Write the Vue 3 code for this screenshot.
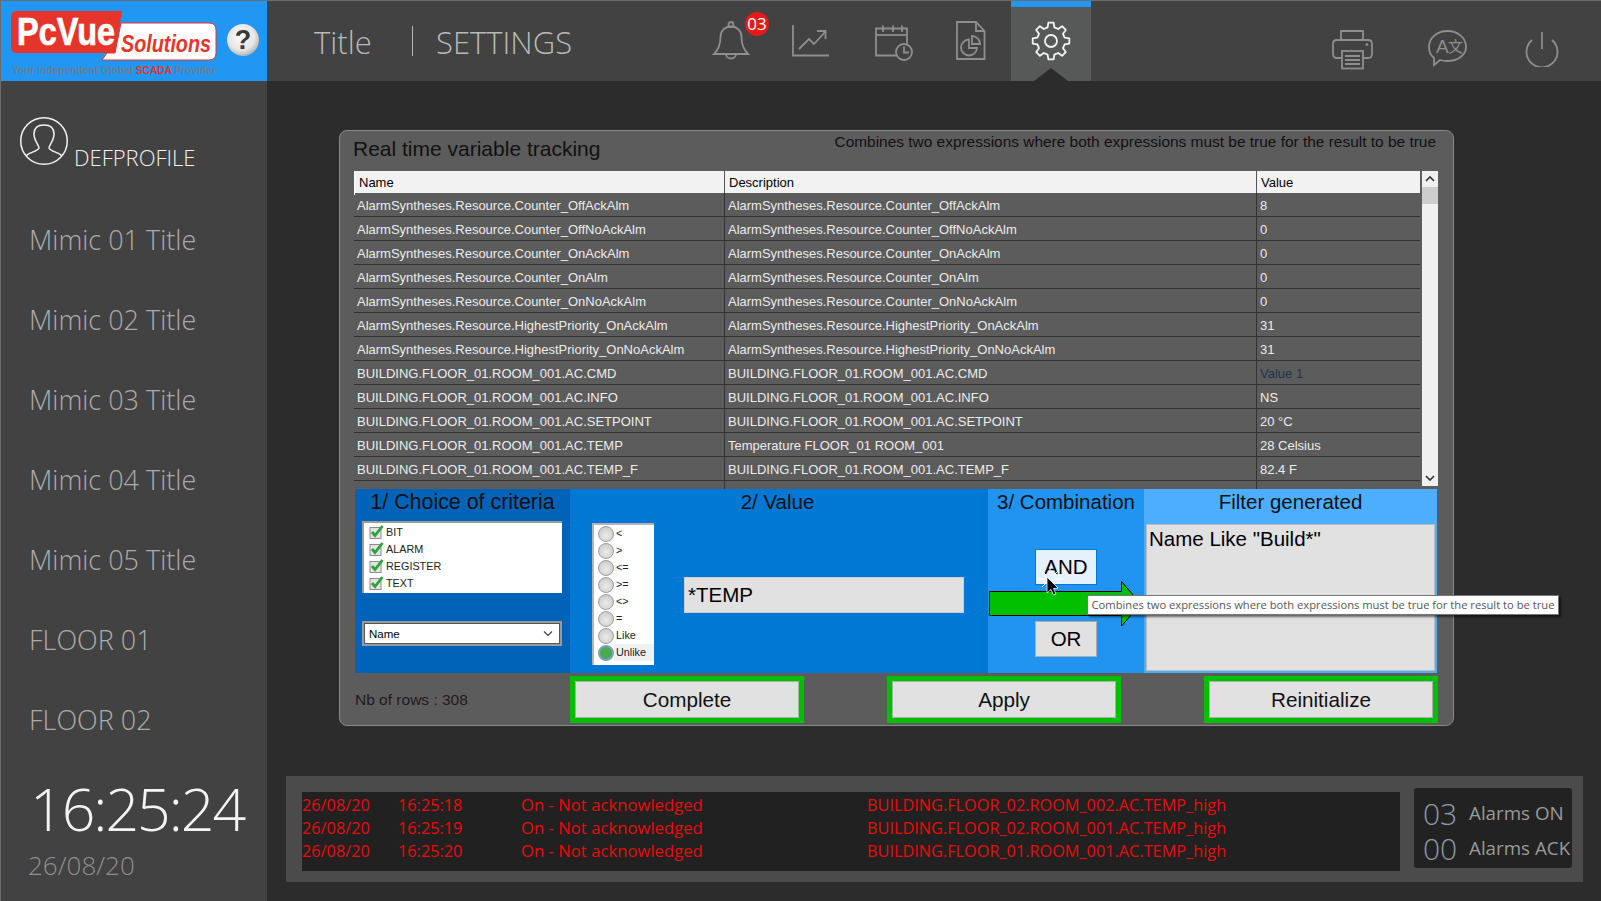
<script setup>
const menu = ['Mimic 01 Title', 'Mimic 02 Title', 'Mimic 03 Title', 'Mimic 04 Title', 'Mimic 05 Title', 'FLOOR 01', 'FLOOR 02']

const b1 = 'BUILDING.FLOOR_01.ROOM_001.AC.'
const rows = [
  ['AlarmSyntheses.Resource.Counter_OffAckAlm', 'AlarmSyntheses.Resource.Counter_OffAckAlm', '8'],
  ['AlarmSyntheses.Resource.Counter_OffNoAckAlm', 'AlarmSyntheses.Resource.Counter_OffNoAckAlm', '0'],
  ['AlarmSyntheses.Resource.Counter_OnAckAlm', 'AlarmSyntheses.Resource.Counter_OnAckAlm', '0'],
  ['AlarmSyntheses.Resource.Counter_OnAlm', 'AlarmSyntheses.Resource.Counter_OnAlm', '0'],
  ['AlarmSyntheses.Resource.Counter_OnNoAckAlm', 'AlarmSyntheses.Resource.Counter_OnNoAckAlm', '0'],
  ['AlarmSyntheses.Resource.HighestPriority_OnAckAlm', 'AlarmSyntheses.Resource.HighestPriority_OnAckAlm', '31'],
  ['AlarmSyntheses.Resource.HighestPriority_OnNoAckAlm', 'AlarmSyntheses.Resource.HighestPriority_OnNoAckAlm', '31'],
  [b1 + 'CMD', b1 + 'CMD', 'Value 1'],
  [b1 + 'INFO', b1 + 'INFO', 'NS'],
  [b1 + 'SETPOINT', b1 + 'SETPOINT', '20 °C'],
  [b1 + 'TEMP', 'Temperature FLOOR_01 ROOM_001', '28 Celsius'],
  [b1 + 'TEMP_F', b1 + 'TEMP_F', '82.4 F'],
  ['', '', '']
]

const criteria = ['BIT', 'ALARM', 'REGISTER', 'TEXT']
const operators = ['<', '>', '<=', '>=', '<>', '=', 'Like', 'Unlike']

const alarms = [
  ['26/08/20', '16:25:18', 'BUILDING.FLOOR_02.ROOM_002.AC.TEMP_high'],
  ['26/08/20', '16:25:19', 'BUILDING.FLOOR_02.ROOM_001.AC.TEMP_high'],
  ['26/08/20', '16:25:20', 'BUILDING.FLOOR_01.ROOM_001.AC.TEMP_high']
]

// gear outline, 8 teeth
function gearPath(cx, cy, outer, inner) {
  const pts = []
  for (let i = 0; i < 8; i++) {
    const a = (i * Math.PI) / 4 - Math.PI / 2
    const s = Math.PI / 8
    const add = (r, t) => pts.push((cx + r * Math.cos(t)).toFixed(1) + ' ' + (cy + r * Math.sin(t)).toFixed(1))
    add(inner, a - s * 0.62)
    add(outer, a - s * 0.36)
    add(outer, a + s * 0.36)
    add(inner, a + s * 0.62)
  }
  return 'M' + pts.join('L') + 'Z'
}
const gear = gearPath(21, 21, 18.5, 14)
</script>

<template>
  <div class="screen">
    <aside class="side">
      <div class="logo">
        <svg width="266" height="80" viewBox="0 0 266 80">
          <path d="M16 10 H121 L114 52 H16 Q10 52 10 46 V16 Q10 10 16 10Z" fill="#e5352a" />
          <path d="M120 22 H208 Q215 22 215 29 V52 Q215 59 208 59 H101 L106 52 H114Z" fill="#fff" stroke="#e5352a" stroke-width="1" />
          <text x="16" y="44" class="lg-pc" textLength="98" lengthAdjust="spacingAndGlyphs">PcVue</text>
          <text x="120" y="51" class="lg-sol" textLength="90" lengthAdjust="spacingAndGlyphs">Solutions</text>
          <text x="11" y="73" class="lg-tag" textLength="204" lengthAdjust="spacingAndGlyphs">Your Independent Global <tspan fill="#e5352a">SCADA</tspan> Provider</text>
          <defs>
            <radialGradient id="hlp" cx="45%" cy="40%" r="60%">
              <stop offset="0%" stop-color="#fbfbfb" />
              <stop offset="70%" stop-color="#e6e6e6" />
              <stop offset="100%" stop-color="#b4b4b4" />
            </radialGradient>
          </defs>
          <circle cx="242" cy="39" r="16" fill="url(#hlp)" />
          <text x="242" y="48" text-anchor="middle" class="lg-help">?</text>
        </svg>
      </div>

      <div class="profile">
        <svg width="50" height="50" viewBox="0 0 50 50" fill="none" stroke="#f2f2f2" stroke-width="1.5">
          <circle cx="25" cy="25" r="23.3" />
          <path d="M7 40 C10 36 18 36 20 32 C20 29 15 25 15 18 C15 12 19 9 25 9 C31 9 35 12 35 18 C35 25 30 29 30 32 C32 36 40 36 43 40" />
        </svg>
        <span class="profile-name">DEFPROFILE</span>
      </div>

      <nav class="menu">
        <div v-for="m in menu" :key="m" class="menu-item">{{ m }}</div>
      </nav>

      <div class="clock">16:25:24</div>
      <div class="date">26/08/20</div>
    </aside>

    <main class="main">
      <header class="top">
        <div class="title">Title</div>
        <div class="sep"></div>
        <div class="page-name">SETTINGS</div>

        <div class="tool bell">
          <svg width="38" height="40" viewBox="0 0 38 40" class="ico">
            <circle cx="19" cy="3.5" r="2.5" />
            <path d="M2 33 C7 28 8.500 23 8.500 16 C8.500 9.500 13 5.500 19 5.500 C25 5.500 29.500 9.500 29.500 16 C29.500 23 31 28 36 33Z" />
            <path d="M14 33 C14 39 24 39 24 33" />
          </svg>
          <span class="badge">03</span>
        </div>
        <div class="tool chart">
          <svg width="38" height="32" viewBox="0 0 38 32" class="ico">
            <path d="M1 0 V30.500 H37" />
            <path d="M7 24 L17 14 L22 19 L33 7" />
            <path d="M25 6 H33.500 V14" />
          </svg>
        </div>
        <div class="tool cal">
          <svg width="39" height="36" viewBox="0 0 39 36" class="ico">
            <path d="M23 30.500 H1 V3.500 H32 V19" />
            <path d="M1 10 H32" />
            <path d="M8 0.500 V7 M18 0.500 V7 M27 0.500 V7" />
            <circle cx="29" cy="27" r="8" />
            <path d="M29 21.500 V27.500 H34" />
          </svg>
        </div>
        <div class="tool doc">
          <svg width="30" height="40" viewBox="0 0 30 40" class="ico">
            <path d="M1 1 H20 L28.500 10 V38 H1Z" />
            <path d="M20 1 V10 H28.500" />
            <path d="M13 18.500 A8 8 0 1 0 21 27 H13Z" />
            <path d="M16 15 A8 8 0 0 1 24 23 H16Z" />
          </svg>
        </div>
        <div class="tool gear-tab">
          <svg width="42" height="42" viewBox="0 0 42 42" class="ico-on">
            <path :d="gear" />
            <circle cx="21" cy="21" r="6" />
          </svg>
          <span class="notch"></span>
        </div>

        <div class="tool printer">
          <svg width="42" height="40" viewBox="0 0 42 40" class="ico">
            <path d="M9 10 V1 H31 V10" />
            <path d="M10 28 H5 Q1 28 1 24 V14 Q1 10 5 10 H36 Q40 10 40 14 V24 Q40 28 36 28 H31" />
            <rect x="10" y="21" width="21" height="17.500" />
            <path d="M13 26 H28 M13 30 H28 M13 34 H28" />
            <circle cx="35" cy="14.500" r="0.600" />
          </svg>
        </div>
        <div class="tool lang">
          <svg width="40" height="38" viewBox="0 0 40 38" class="ico">
            <path d="M6 28 C2 25 1 21 1 17 C1 8 9 1 19.500 1 C30 1 38 8 38 17 C38 25 30 31 19.500 31 C16.500 31 14 30.500 12 30 L6 35 Z" />
            <text x="8" y="23" class="t-a">A</text>
            <text x="20" y="22" class="t-b">文</text>
          </svg>
        </div>
        <div class="tool power">
          <svg width="34" height="36" viewBox="0 0 34 36" class="ico">
            <path d="M17 1 V18" />
            <path d="M7 9 A15.500 15.500 0 1 0 27 9" />
          </svg>
        </div>
      </header>

      <section class="panel">
        <div class="panel-head">
          <div class="panel-title">Real time variable tracking</div>
          <div class="panel-hint">Combines two expressions where both expressions must be true for the result to be true</div>
        </div>

        <div class="grid-wrap">
          <div class="grid">
            <div class="g-head">
              <div>Name</div>
              <div>Description</div>
              <div>Value</div>
            </div>
            <div class="g-body">
              <div v-for="(r, i) in rows" :key="i" class="g-row">
                <div>{{ r[0] }}</div>
                <div>{{ r[1] }}</div>
                <div :class="{ linked: r[2] === 'Value 1' }">{{ r[2] }}</div>
              </div>
            </div>
          </div>
          <div class="scroll">
            <svg width="16" height="16" viewBox="0 0 16 16" fill="none" stroke="#333" stroke-width="1.6"><path d="M4 10 L8 6 L12 10" /></svg>
            <div class="thumb"></div>
            <div class="track"></div>
            <svg width="16" height="16" viewBox="0 0 16 16" fill="none" stroke="#333" stroke-width="1.6"><path d="M4 6 L8 10 L12 6" /></svg>
          </div>
        </div>

        <div class="filter">
          <div class="f-col c1">
            <div class="f-h">1/ Choice of criteria</div>
            <div class="checks">
              <div v-for="c in criteria" :key="c" class="chk">
                <svg width="15" height="15" viewBox="0 0 15 15">
                  <rect x="1" y="3.500" width="11" height="11" fill="#e4e4e4" stroke="#8b8b8b" />
                  <path d="M3 8 L6 11.500 L13.500 2" fill="none" stroke="#2da33a" stroke-width="2.800" />
                </svg>
                <span>{{ c }}</span>
              </div>
            </div>
            <div class="combo">
              <span>Name</span>
              <svg width="12" height="8" viewBox="0 0 12 8" fill="none" stroke="#444" stroke-width="1.200"><path d="M2 1.500 L6 5.500 L10 1.500" /></svg>
            </div>
          </div>

          <div class="f-col c2">
            <div class="f-h">2/ Value</div>
            <div class="c2-body">
              <div class="radios">
                <div v-for="o in operators" :key="o" class="radio" :class="{ on: o === 'Unlike' }">
                  <i class="dot"></i>
                  <span>{{ o }}</span>
                </div>
              </div>
              <div class="value-box">*TEMP</div>
            </div>
          </div>

          <div class="f-col c3">
            <div class="f-h">3/ Combination</div>
            <div class="btn-and">AND</div>
            <div class="btn-or">OR</div>
          </div>

          <div class="f-col c4">
            <div class="f-h">Filter generated</div>
            <div class="filter-box">Name Like "Build*"</div>
          </div>
        </div>

        <div class="actions">
          <div class="count">Nb of rows : 308</div>
          <div class="act">Complete</div>
          <div class="act">Apply</div>
          <div class="act">Reinitialize</div>
        </div>

        <!-- overlays : arrow, tooltip and mouse -->
        <svg class="arrow" width="154" height="48" viewBox="0 0 154 48">
          <path d="M0.500 11.500 H132.500 V1.500 L152 24 L132.500 46 V35.500 H0.500Z" fill="#00c000" stroke="#000" />
        </svg>
        <div class="tip">Combines two expressions where both expressions must be true for the result to be true</div>
        <svg class="cursor" width="30" height="34" viewBox="0 0 30 34">
          <path d="M2 13 H10 M20 13 H28 M15 1 V7 M7 5 L11 9 M23 5 L19 9 M7 21 L11 17" stroke="#fff" stroke-width="1" fill="none" />
          <path d="M12 11 V27 L16 23.500 L18.500 29 L21 28 L18.500 22.500 L23 22Z" fill="#000" stroke="#fff" stroke-width="0.800" />
        </svg>
      </section>

      <section class="alarm-bar">
        <div class="alarm-list">
          <div v-for="a in alarms" :key="a[1]" class="alarm-row">
            <span class="a-date">{{ a[0] }}</span>
            <span class="a-time">{{ a[1] }}</span>
            <span class="a-state">On - Not acknowledged</span>
            <span>{{ a[2] }}</span>
          </div>
        </div>
        <div class="alarm-count">
          <div class="cnt-row"><b>03</b><span>Alarms ON</span></div>
          <div class="cnt-row"><b>00</b><span>Alarms ACK</span></div>
        </div>
      </section>
    </main>
  </div>
</template>

<style>
html, body {
  margin: 0;
  background: #2c2c2c;
}
</style>

<style scoped>
.screen {
  width: 1600px;
  height: 900px;
  display: flex;
  border-top: 1px solid #6c6c6c;
  border-left: 1px solid #6c6c6c;
  background: #2c2c2c;
  overflow: hidden;
  font-family: "Liberation Sans", Arial, sans-serif;
}

/* side */
.side {
  width: 266px;
  flex: none;
  background: #424242;
  font-family: "Open Sans", sans-serif;
  font-weight: 300;
}
.logo {
  height: 80px;
  background: #2196f3;
}
.logo svg {
  display: block;
}
.lg-pc {
  font: bold 38px "Liberation Sans", sans-serif;
  fill: #fff;
  stroke: #fff;
  stroke-width: 0.7;
}
.lg-sol {
  font: italic bold 23.5px "Liberation Sans", sans-serif;
  fill: #e5352a;
}
.lg-tag {
  font: bold 11.2px "Liberation Sans", sans-serif;
  fill: #6b7f92;
}
.lg-help {
  font: bold 27px "Liberation Sans", sans-serif;
  fill: #3a3a3a;
}
.profile {
  display: flex;
  align-items: flex-end;
  height: 59px;
  padding: 26px 0 0 18px;
  color: #f2f2f2;
}
.profile-name {
  font-size: 22px;
  line-height: 30px;
  margin-left: 5px;
  margin-bottom: -6px;
}
.menu {
  margin-top: 34px;
  padding-left: 28px;
}
.menu-item {
  height: 80px;
  line-height: 80px;
  font-size: 27px;
  color: #acacac;
}
.clock {
  margin-top: 8px;
  padding-left: 29px;
  font-size: 59px;
  letter-spacing: -2px;
  line-height: 80px;
  color: #f4f4f4;
}
.date {
  padding-left: 27px;
  font-size: 26px;
  line-height: 36px;
  margin-top: -1px;
  color: #8f8f8f;
}

/* top bar */
.main {
  flex: 1;
  min-width: 0;
}
.top {
  height: 80px;
  background: #424242;
  display: flex;
  align-items: center;
  position: relative;
  color: #b9b9b9;
  font-family: "Open Sans", sans-serif;
  font-weight: 300;
}
.title {
  margin-left: 47px;
  width: 98px;
  font-size: 31px;
  padding-top: 1px;
}
.sep {
  width: 1px;
  height: 30px;
  background: #b9b9b9;
  margin-right: 23px;
}
.page-name {
  font-size: 31px;
  padding-top: 1px;
  width: 146px;
}
.tool {
  flex: none;
  position: relative;
  display: flex;
}
.ico {
  fill: none;
  stroke: #8e8e8e;
  stroke-width: 1.8;
}
.ico-on {
  fill: none;
  stroke: #f4f4f4;
  stroke-width: 1.8;
  stroke-linejoin: round;
}
.t-a {
  font: 19px "Liberation Sans", sans-serif;
  fill: #8e8e8e;
  stroke: none;
}
.t-b {
  font: 15px "Noto Sans CJK SC", sans-serif;
  fill: #8e8e8e;
  stroke: none;
}
.bell {
  margin-left: 130px;
}
.badge {
  position: absolute;
  left: 33px;
  top: -9px;
  width: 24px;
  height: 24px;
  border-radius: 50%;
  background: #e31b1b;
  color: #fff;
  font: 400 17px/24px "Open Sans", sans-serif;
  text-align: center;
}
.chart {
  margin-left: 42px;
}
.cal {
  margin-left: 45px;
  margin-top: 3px;
}
.doc {
  margin-left: 42px;
}
.gear-tab {
  margin-left: 25px;
  width: 80px;
  height: 80px;
  box-sizing: border-box;
  background: #575958;
  border-top: 6px solid #2196f3;
  justify-content: center;
  padding-top: 13px;
}
.notch {
  position: absolute;
  left: 23px;
  bottom: 0;
  width: 0;
  height: 0;
  border-left: 17px solid transparent;
  border-right: 17px solid transparent;
  border-bottom: 13px solid #2c2c2c;
}
.printer {
  margin-left: 241px;
  margin-top: 18px;
}
.lang {
  margin-left: 54px;
  margin-top: 16px;
}
.power {
  margin-left: 57px;
  margin-top: 16px;
}

/* panel */
.panel {
  position: relative;
  width: 1115px;
  height: 596px;
  box-sizing: border-box;
  margin: 49px 0 0 72px;
  padding: 0 15px 0 15px;
  background: #5c5c5c;
  border: 1px solid #8a8a8a;
  border-radius: 8px;
}
.panel-head {
  height: 40px;
  display: flex;
  justify-content: space-between;
}
.panel-title {
  font-size: 21px;
  line-height: 35px;
  margin-left: -2px;
  color: #111;
}
.panel-hint {
  font-size: 15.45px;
  line-height: 21px;
  color: #111;
  margin-right: 2px;
}
.grid-wrap {
  display: flex;
  height: 318px;
  margin-left: -1px;
}
.grid {
  width: 1066px;
  font-size: 13px;
  overflow: hidden;
}
.g-head {
  display: grid;
  grid-template-columns: 370px 532px 164px;
  height: 22px;
  background: #f2f2f2;
  color: #000;
  line-height: 24px;
}
.g-head div {
  padding-left: 4px;
  border-left: 1px solid #fff;
}
.g-head div + div {
  border-left: 1px solid #555;
}
.g-row {
  display: grid;
  grid-template-columns: 370px 532px 164px;
  height: 24px;
  box-sizing: border-box;
  border-bottom: 1px solid #333;
  line-height: 25px;
  color: #ececec;
}
.g-row div {
  padding-left: 3px;
  white-space: nowrap;
}
.g-row div + div {
  border-left: 1px solid #333;
}
.g-row .linked {
  color: #1c3350;
}
.g-row:last-child {
  border-bottom: 0;
}
.g-body {
  height: 296px;
  overflow: hidden;
}
.scroll {
  width: 16px;
  height: 315px;
  margin-left: 2px;
  background: #f0f0f0;
  display: flex;
  flex-direction: column;
}
.thumb {
  height: 17px;
  background: #cdcdcd;
}
.track {
  flex: 1;
}

/* filter block */
.filter {
  display: grid;
  grid-template-columns: 215px 418px 156px 293px;
  height: 184px;
  color: #000;
}
.f-col {
  min-width: 0;
}
.f-h {
  height: 32px;
  line-height: 26px;
  font-size: 20.5px;
  text-align: center;
  color: #111;
}
.c1 .f-h {
  font-size: 21.4px;
}
.c2 .f-h {
  padding-right: 3px;
}
.c1 {
  background: #0063b7;
}
.c2 {
  background: #0078d4;
}
.c3 {
  background: #2094f0;
}
.c4 {
  background: #4dadff;
}
.checks {
  margin-left: 7px;
  width: 200px;
  height: 72px;
  box-sizing: border-box;
  padding: 0 0 0 5px;
  background: #fff;
  border-top: 2px solid #9a9a9a;
  border-left: 2px solid #9a9a9a;
}
.chk {
  display: flex;
  align-items: center;
  height: 17px;
  font-size: 10.8px;
  color: #222;
}
.chk span {
  margin-left: 2px;
}
.combo {
  margin: 28px 0 0 7px;
  width: 200px;
  height: 25px;
  box-sizing: border-box;
  padding: 0 6px 0 5px;
  background: #fff;
  border: 2px solid #9a9a9a;
  outline: 1px solid #555;
  outline-offset: -3px;
  display: flex;
  align-items: center;
  justify-content: space-between;
  font-size: 11.5px;
}
.c2-body {
  display: flex;
  align-items: flex-start;
  margin-top: 2px;
}
.radios {
  margin-left: 22px;
  width: 62px;
  height: 142px;
  box-sizing: border-box;
  padding-top: 0;
  background: #fff;
  border-top: 2px solid #b4b4b4;
  border-left: 2px solid #b4b4b4;
}
.radio {
  display: flex;
  align-items: center;
  height: 17px;
  padding-left: 4px;
  font-size: 10.8px;
  color: #222;
}
.radio span {
  margin-left: 2px;
  line-height: 17px;
}
.dot {
  width: 14px;
  height: 14px;
  flex: none;
  border-radius: 50%;
  border: 1px solid #9c9c9c;
  background: radial-gradient(circle at 50% 60%, #ebebeb, #c4c4c4);
}
.radio.on .dot {
  border: 2px solid #7d9fc6;
  width: 12px;
  height: 12px;
  background: #47ad4c;
}
.radio.on span {
  background: #f0f0f0;
  padding: 0 3px 0 2px;
  margin-left: 0;
  flex: 1;
}
.value-box {
  margin: 54px 0 0 30px;
  width: 280px;
  height: 36px;
  box-sizing: border-box;
  padding-left: 3px;
  background: #e1e1e1;
  border: 1px solid #cdcdcd;
  font-size: 20.5px;
  line-height: 34px;
}
.btn-and,
.btn-or {
  width: 62px;
  height: 36px;
  box-sizing: border-box;
  margin-left: 47px;
  text-align: center;
  font-size: 20.5px;
  line-height: 34px;
}
.btn-and {
  margin-top: 28px;
  background: #e5f1fb;
  border: 1px solid #0078d7;
}
.btn-or {
  margin-top: 36px;
  background: #e1e1e1;
  border: 1px solid #adadad;
}
.filter-box {
  margin: 3px 2px 0;
  height: 147px;
  box-sizing: border-box;
  padding: 1px 2px 0;
  background: #e1e1e1;
  border: 1px solid #bdbdbd;
  font-size: 20.5px;
  line-height: 26px;
}

/* buttons under */
.actions {
  display: flex;
  margin: 3px 0 0;
  height: 47px;
}
.count {
  width: 215px;
  font-size: 15.5px;
  line-height: 47px;
  color: #1c1c1c;
}
.act {
  width: 234px;
  box-sizing: border-box;
  margin-right: 83px;
  background: #e1e1e1;
  border: 5px solid #00c000;
  outline: 1px solid #adadad;
  outline-offset: -6px;
  text-align: center;
  font-size: 20.7px;
  line-height: 37px;
  color: #111;
}
.act:last-child {
  margin-right: 0;
}

/* things laid over the filter block */
.arrow {
  position: absolute;
  left: 649px;
  top: 449px;
}
.tip {
  position: absolute;
  left: 747px;
  top: 464px;
  width: 472px;
  height: 20px;
  box-sizing: border-box;
  background: #fff;
  border: 1px solid #767676;
  box-shadow: 2px 2px 2px rgba(0, 0, 0, .55);
  font: 11.2px/18px "Open Sans", sans-serif;
  color: #575757;
  text-align: center;
  white-space: nowrap;
}
.cursor {
  position: absolute;
  left: 695px;
  top: 435px;
}

/* alarms */
.alarm-bar {
  width: 1297px;
  height: 106px;
  box-sizing: border-box;
  margin: 50px 0 0 19px;
  padding: 12px 11px 0 16px;
  background: #4b4b4b;
  display: flex;
  align-items: flex-start;
  font-family: "Open Sans", sans-serif;
}
.alarm-list {
  width: 1098px;
  height: 79px;
  margin-top: 4px;
  padding-top: 2px;
  box-sizing: border-box;
  background: #212121;
  color: #e80c0c;
  font-size: 16.3px;
}
.alarm-row {
  height: 22.900px;
  line-height: 22.900px;
  display: flex;
}
.a-date {
  width: 96px;
}
.a-time {
  width: 123px;
}
.a-state {
  width: 346px;
  font-size: 16.7px;
}
.alarm-count {
  margin-left: 14px;
  width: 158px;
  height: 80px;
  border-radius: 3px;
  box-sizing: border-box;
  padding-top: 8px;
  background: #222;
  overflow: hidden;
  color: #9a9a9a;
}
.cnt-row {
  display: flex;
  align-items: center;
  height: 35px;
  padding-left: 9px;
}
.cnt-row b {
  font-weight: 300;
  font-size: 30px;
  line-height: 35px;
  width: 46px;
  color: #8d9aa5;
}
.cnt-row span {
  font-size: 18.8px;
  line-height: 26px;
  margin-top: -2px;
  white-space: nowrap;
}
</style>
